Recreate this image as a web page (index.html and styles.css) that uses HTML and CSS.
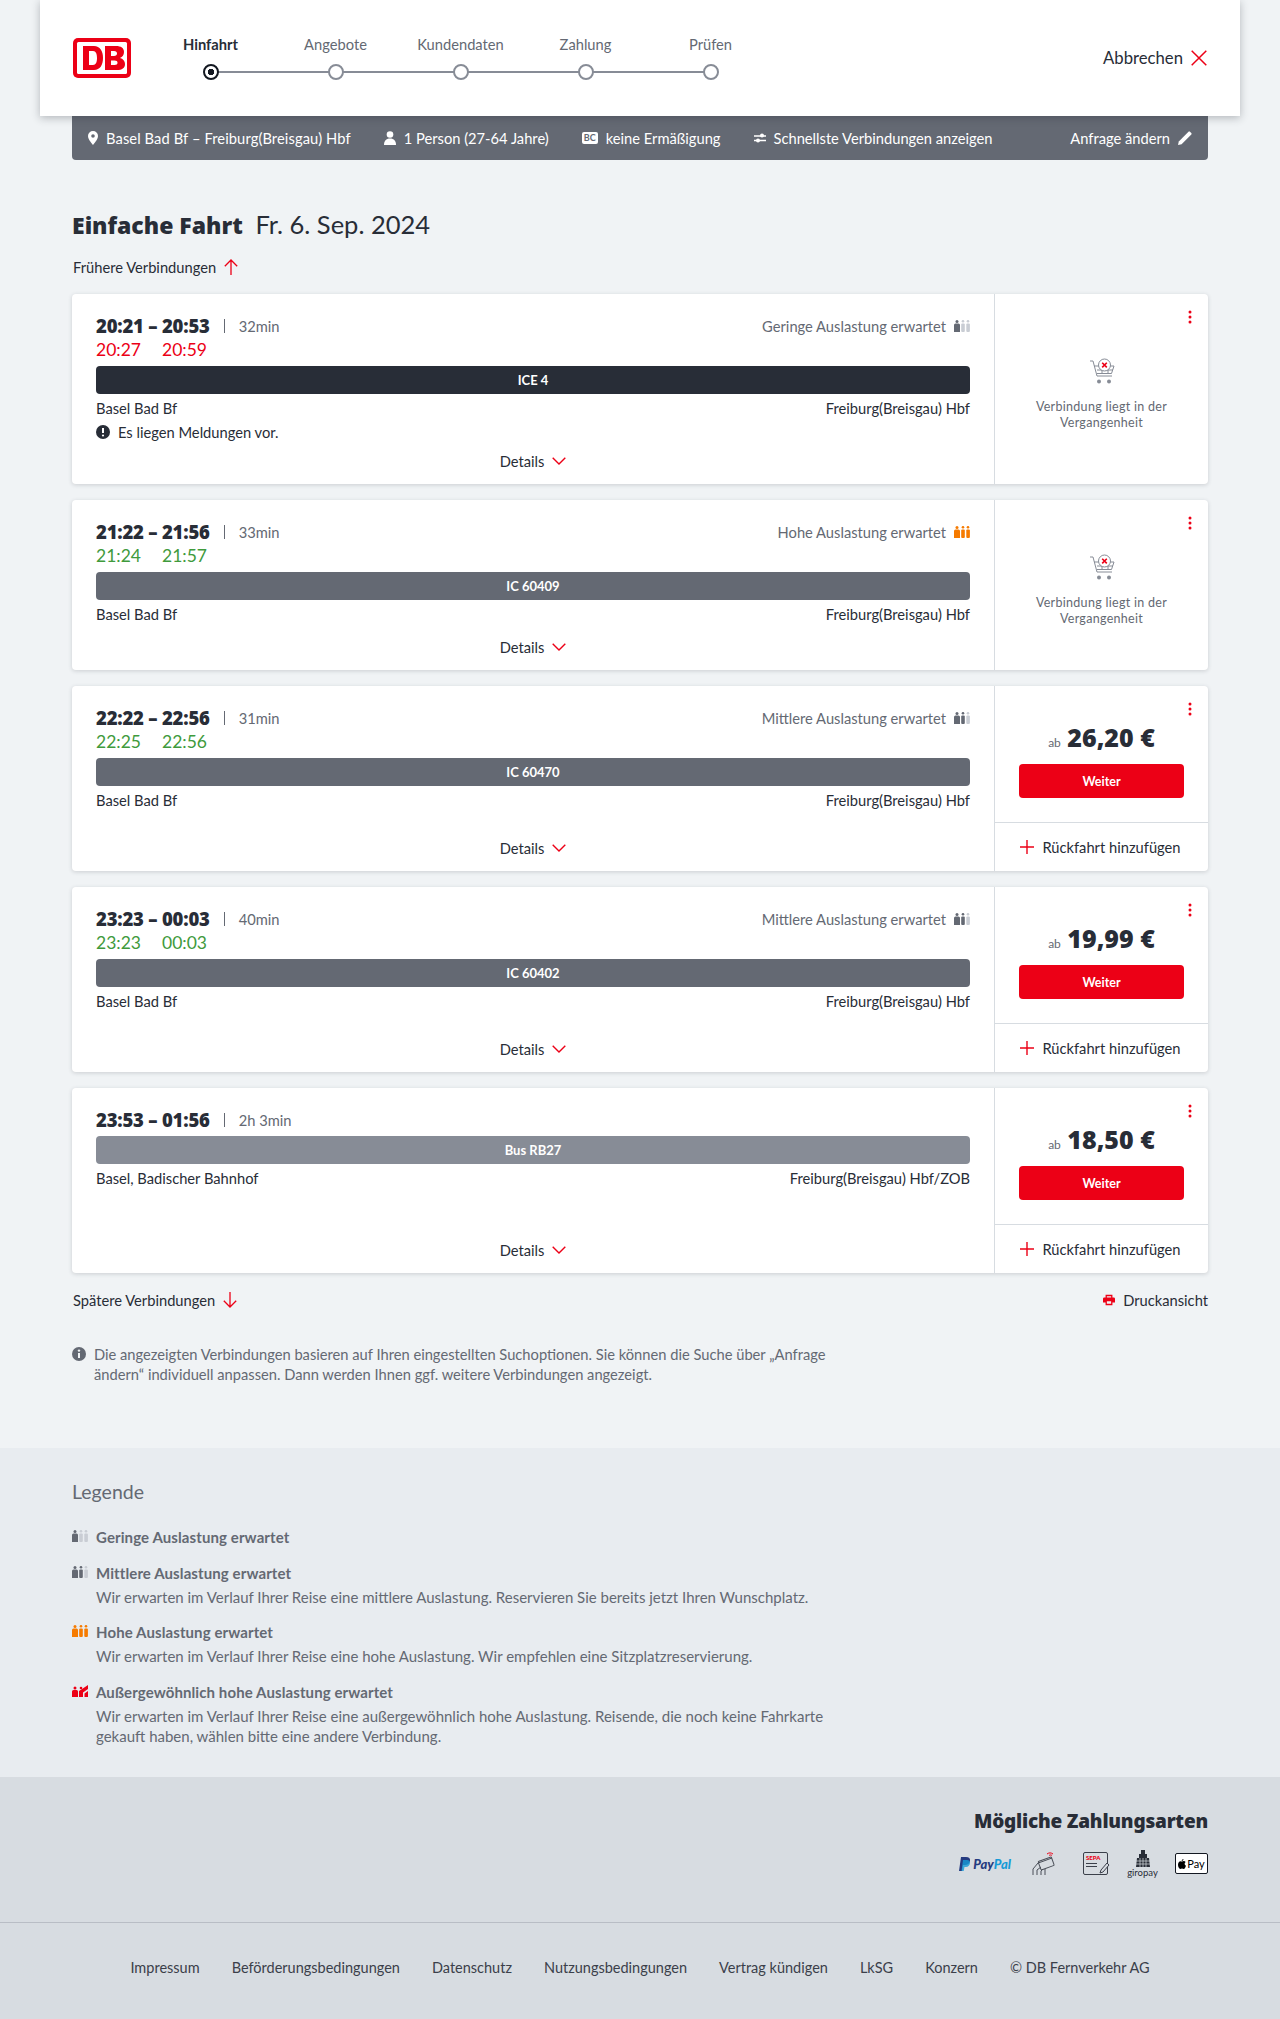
FILE: index.html
```html
<!DOCTYPE html>
<html lang="de">
<head>
  <meta charset="UTF-8" />
  <title>Fahrplan - Einfache Fahrt</title>
  <link rel="stylesheet" href="styles.css">
</head>
<body>
  <svg class="sprite" width="0" height="0">
    <symbol id="occ-low" viewBox="0 0 16 12">
      <g fill="#c9cdd4"><circle cx="9" cy="1.3" r="1.3"/><rect x="7.2" y="3.6" width="3.6" height="8.4" rx="1"/><circle cx="14" cy="1.3" r="1.3"/><rect x="12.3" y="3.6" width="3.6" height="8.4" rx="1"/></g>
      <circle cx="3" cy="1.5" r="1.5" fill="#646973"/><path d="M0 5a1.5 1.5 0 0 1 1.5-1.5h3A1.5 1.5 0 0 1 6 5v7H0z" fill="#646973"/>
    </symbol>
    <symbol id="occ-mid" viewBox="0 0 16 12">
      <circle cx="14" cy="1.3" r="1.3" fill="#c9cdd4"/><rect x="12.3" y="3.6" width="3.6" height="8.4" rx="1" fill="#c9cdd4"/>
      <g fill="#646973"><circle cx="3" cy="1.5" r="1.5"/><path d="M0 5a1.5 1.5 0 0 1 1.5-1.5h3A1.5 1.5 0 0 1 6 5v7H0z"/><circle cx="9" cy="1.3" r="1.3"/><rect x="7.2" y="3.6" width="3.6" height="8.4" rx="1"/></g>
    </symbol>
    <symbol id="occ-high" viewBox="0 0 16 12">
      <g fill="#f67b00"><circle cx="3" cy="1.5" r="1.5"/><path d="M0 5a1.5 1.5 0 0 1 1.5-1.5h3A1.5 1.5 0 0 1 6 5v7H0z"/><circle cx="9" cy="1.3" r="1.3"/><rect x="7.2" y="3.6" width="3.6" height="8.4" rx="1"/><circle cx="14" cy="1.3" r="1.3"/><rect x="12.3" y="3.6" width="3.6" height="8.4" rx="1"/></g>
    </symbol>
    <symbol id="cart" viewBox="0 0 26 26">
      <g fill="none" stroke="#878c96" stroke-width="1">
        <path d="M1 3h3l4 15h15"/><path d="M5 8h20l-2.5 7.5H8"/><path d="M8 12h16M13 8v7M19 8v7"/>
        <circle cx="15.5" cy="7" r="6" fill="#fff"/>
      </g>
      <circle cx="10" cy="23.5" r="2" fill="#878c96"/><circle cx="20" cy="23.5" r="2" fill="#878c96"/>
      <path d="M13.2 4.8l4.6 4.6M17.8 4.8l-4.6 4.6" stroke="#ec0016" stroke-width="1.6" fill="none"/>
    </symbol>
    <symbol id="chevron" viewBox="0 0 14 8"><path d="M.7.7L7 7l6.3-6.3" fill="none" stroke="#ec0016" stroke-width="1.4"/></symbol>
    <symbol id="plus" viewBox="0 0 14 14"><path d="M7 0v14M0 7h14" fill="none" stroke="#ec0016" stroke-width="1.4"/></symbol>
    <symbol id="dots" viewBox="0 0 4 14"><g fill="#ec0016"><circle cx="2" cy="2" r="1.5"/><circle cx="2" cy="7" r="1.5"/><circle cx="2" cy="12" r="1.5"/></g></symbol>
  </svg>

  <header class="topbar">
    <svg class="db-logo" viewBox="0 0 58 40">
      <rect width="58" height="40" rx="5" fill="#ec0016"/>
      <rect x="4" y="4" width="50" height="32" rx="1.5" fill="#fff"/>
      <path d="M10 8h11c6 0 9 5 9 12s-3 12-9 12H10zM16 13v14h4c3 0 4-3 4-7s-1-7-4-7zM32 8h11c5 0 8 2 8 6 0 3-1.500 5-4 6 3 .8 5 3 5 6 0 4-3 6-8 6H32zM38 13v5h3c2 0 3-1 3-2.500S43 13 41 13zM38 22.500V27h3.500c2 0 3-1 3-2.300s-1-2.200-3-2.200z" fill="#ec0016" fill-rule="evenodd"/>
    </svg>
    <ol class="steps">
      <li class="step step-active"><span class="step-label">Hinfahrt</span><span class="step-dot"></span></li>
      <li class="step"><span class="step-label">Angebote</span><span class="step-dot"></span></li>
      <li class="step"><span class="step-label">Kundendaten</span><span class="step-dot"></span></li>
      <li class="step"><span class="step-label">Zahlung</span><span class="step-dot"></span></li>
      <li class="step"><span class="step-label">Prüfen</span><span class="step-dot"></span></li>
    </ol>
    <div class="cancel">
      <span>Abbrechen</span>
      <svg width="16" height="16" viewBox="0 0 16 16"><path d="M.7.700l14.600 14.600M15.300.700L.7 15.300" fill="none" stroke="#ec0016" stroke-width="1.5"/></svg>
    </div>
  </header>

  <div class="summary">
    <div class="summary-item summary-route">
      <svg width="10" height="14" viewBox="0 0 10 14"><path d="M5 0a5 5 0 0 1 5 5c0 3.500-5 9-5 9S0 8.500 0 5a5 5 0 0 1 5-5zm0 3.200a1.800 1.800 0 1 0 0 3.600 1.800 1.800 0 0 0 0-3.600z" fill="#fff" fill-rule="evenodd"/></svg>
      <span>Basel Bad Bf – Freiburg(Breisgau) Hbf</span>
    </div>
    <div class="summary-item">
      <svg width="12" height="14" viewBox="0 0 12 14"><circle cx="6" cy="3.500" r="3.300" fill="#fff"/><path d="M0 14c0-4 2-6.500 6-6.500s6 2.500 6 6.500z" fill="#fff"/></svg>
      <span>1 Person (27-64 Jahre)</span>
    </div>
    <div class="summary-item">
      <span class="bc-badge">BC</span>
      <span>keine Ermäßigung</span>
    </div>
    <div class="summary-item">
      <svg width="12" height="10" viewBox="0 0 12 10"><path d="M0 3h12M0 7.500h12" stroke="#fff" stroke-width="1.500"/><circle cx="8" cy="2.500" r="2" fill="#fff"/><circle cx="4" cy="7.500" r="2" fill="#fff"/></svg>
      <span>Schnellste Verbindungen anzeigen</span>
    </div>
    <div class="summary-item summary-edit">
      <span>Anfrage ändern</span>
      <svg width="14" height="14" viewBox="0 0 14 14"><path d="M0 14l.8-3.600L10.500.7a1 1 0 0 1 1.400 0l1.400 1.400a1 1 0 0 1 0 1.400L3.600 13.200z" fill="#fff"/></svg>
    </div>
  </div>

  <main class="content">
    <h1 class="page-title"><strong>Einfache Fahrt</strong> <span>Fr. 6. Sep. 2024</span></h1>
    <a class="page-link">Frühere Verbindungen
      <svg width="14" height="16" viewBox="0 0 14 16"><path d="M7 16V1M.8 7.200L7 1l6.200 6.200" fill="none" stroke="#ec0016" stroke-width="1.300"/></svg>
    </a>

    <section class="results">
      <article class="card">
        <div class="trip">
          <div class="trip-head">
            <span class="times">20:21 – 20:53</span><span class="sep"></span><span class="duration">32min</span>
            <span class="load">Geringe Auslastung erwartet <svg class="occ"><use href="#occ-low"/></svg></span>
          </div>
          <div class="delay late"><span>20:27</span><span>20:59</span></div>
          <div class="train train-ice">ICE 4</div>
          <div class="stations"><span>Basel Bad Bf</span><span>Freiburg(Breisgau) Hbf</span></div>
          <div class="notice">
            <svg width="14" height="14" viewBox="0 0 14 14"><circle cx="7" cy="7" r="7" fill="#282d37"/><path d="M7 3v5" stroke="#fff" stroke-width="2"/><circle cx="7" cy="10.500" r="1.100" fill="#fff"/></svg>
            Es liegen Meldungen vor.
          </div>
          <div class="details">Details <svg class="chev"><use href="#chevron"/></svg></div>
        </div>
        <aside class="offer offer-past">
          <svg class="more"><use href="#dots"/></svg>
          <svg class="cart"><use href="#cart"/></svg>
          <p>Verbindung liegt in der Vergangenheit</p>
        </aside>
      </article>

      <article class="card">
        <div class="trip">
          <div class="trip-head">
            <span class="times">21:22 – 21:56</span><span class="sep"></span><span class="duration">33min</span>
            <span class="load">Hohe Auslastung erwartet <svg class="occ"><use href="#occ-high"/></svg></span>
          </div>
          <div class="delay ontime"><span>21:24</span><span>21:57</span></div>
          <div class="train">IC 60409</div>
          <div class="stations"><span>Basel Bad Bf</span><span>Freiburg(Breisgau) Hbf</span></div>
          <div class="details">Details <svg class="chev"><use href="#chevron"/></svg></div>
        </div>
        <aside class="offer offer-past">
          <svg class="more"><use href="#dots"/></svg>
          <svg class="cart"><use href="#cart"/></svg>
          <p>Verbindung liegt in der Vergangenheit</p>
        </aside>
      </article>

      <article class="card">
        <div class="trip">
          <div class="trip-head">
            <span class="times">22:22 – 22:56</span><span class="sep"></span><span class="duration">31min</span>
            <span class="load">Mittlere Auslastung erwartet <svg class="occ"><use href="#occ-mid"/></svg></span>
          </div>
          <div class="delay ontime"><span>22:25</span><span>22:56</span></div>
          <div class="train">IC 60470</div>
          <div class="stations"><span>Basel Bad Bf</span><span>Freiburg(Breisgau) Hbf</span></div>
          <div class="details">Details <svg class="chev"><use href="#chevron"/></svg></div>
        </div>
        <aside class="offer">
          <svg class="more"><use href="#dots"/></svg>
          <div class="offer-main">
            <div class="price"><small>ab</small> 26,20 €</div>
            <button class="btn-next">Weiter</button>
          </div>
          <div class="return"><svg class="plus"><use href="#plus"/></svg>Rückfahrt hinzufügen</div>
        </aside>
      </article>

      <article class="card">
        <div class="trip">
          <div class="trip-head">
            <span class="times">23:23 – 00:03</span><span class="sep"></span><span class="duration">40min</span>
            <span class="load">Mittlere Auslastung erwartet <svg class="occ"><use href="#occ-mid"/></svg></span>
          </div>
          <div class="delay ontime"><span>23:23</span><span>00:03</span></div>
          <div class="train">IC 60402</div>
          <div class="stations"><span>Basel Bad Bf</span><span>Freiburg(Breisgau) Hbf</span></div>
          <div class="details">Details <svg class="chev"><use href="#chevron"/></svg></div>
        </div>
        <aside class="offer">
          <svg class="more"><use href="#dots"/></svg>
          <div class="offer-main">
            <div class="price"><small>ab</small> 19,99 €</div>
            <button class="btn-next">Weiter</button>
          </div>
          <div class="return"><svg class="plus"><use href="#plus"/></svg>Rückfahrt hinzufügen</div>
        </aside>
      </article>

      <article class="card">
        <div class="trip">
          <div class="trip-head">
            <span class="times">23:53 – 01:56</span><span class="sep"></span><span class="duration">2h 3min</span>
          </div>
          <div class="train train-bus">Bus RB27</div>
          <div class="stations"><span>Basel, Badischer Bahnhof</span><span>Freiburg(Breisgau) Hbf/ZOB</span></div>
          <div class="details">Details <svg class="chev"><use href="#chevron"/></svg></div>
        </div>
        <aside class="offer">
          <svg class="more"><use href="#dots"/></svg>
          <div class="offer-main">
            <div class="price"><small>ab</small> 18,50 €</div>
            <button class="btn-next">Weiter</button>
          </div>
          <div class="return"><svg class="plus"><use href="#plus"/></svg>Rückfahrt hinzufügen</div>
        </aside>
      </article>
    </section>

    <div class="after-results">
      <a class="page-link">Spätere Verbindungen
        <svg width="14" height="16" viewBox="0 0 14 16"><path d="M7 0v15M.8 8.800L7 15l6.200-6.200" fill="none" stroke="#ec0016" stroke-width="1.300"/></svg>
      </a>
      <a class="page-link print">
        <svg width="12" height="12" viewBox="0 0 14 14"><path d="M3 4V1h8v3h1.500A1.500 1.500 0 0 1 14 5.500V10h-3v3H3v-3H0V5.500A1.500 1.500 0 0 1 1.500 4zm1.500 0h5V2.500h-5zm0 4.500v3h5v-3z" fill="#ec0016" fill-rule="evenodd"/></svg>
        Druckansicht
      </a>
    </div>

    <p class="hint">
      <svg width="14" height="14" viewBox="0 0 14 14"><circle cx="7" cy="7" r="7" fill="#646973"/><path d="M7 6v5" stroke="#f0f3f5" stroke-width="2"/><circle cx="7" cy="3.600" r="1.200" fill="#f0f3f5"/></svg>
      <span>Die angezeigten Verbindungen basieren auf Ihren eingestellten Suchoptionen. Sie können die Suche über „Anfrage ändern“ individuell anpassen. Dann werden Ihnen ggf. weitere Verbindungen angezeigt.</span>
    </p>
  </main>

  <section class="legend">
    <h2>Legende</h2>
    <div class="legend-item">
      <svg class="occ"><use href="#occ-low"/></svg>
      <div><h3>Geringe Auslastung erwartet</h3></div>
    </div>
    <div class="legend-item">
      <svg class="occ"><use href="#occ-mid"/></svg>
      <div><h3>Mittlere Auslastung erwartet</h3><p>Wir erwarten im Verlauf Ihrer Reise eine mittlere Auslastung. Reservieren Sie bereits jetzt Ihren Wunschplatz.</p></div>
    </div>
    <div class="legend-item">
      <svg class="occ"><use href="#occ-high"/></svg>
      <div><h3>Hohe Auslastung erwartet</h3><p>Wir erwarten im Verlauf Ihrer Reise eine hohe Auslastung. Wir empfehlen eine Sitzplatzreservierung.</p></div>
    </div>
    <div class="legend-item">
      <svg class="occ" viewBox="0 0 16 12">
        <g fill="#ec0016"><circle cx="3" cy="3" r="1.500"/><path d="M0 6.500A1.500 1.500 0 0 1 1.500 5h3A1.500 1.500 0 0 1 6 6.500V12H0z"/><circle cx="9" cy="3" r="1.300"/><path d="M7 12V6l9-6v4l-5 3.500V12zM12.500 12V8.500L16 6v6z"/></g>
      </svg>
      <div><h3>Außergewöhnlich hohe Auslastung erwartet</h3><p>Wir erwarten im Verlauf Ihrer Reise eine außergewöhnlich hohe Auslastung. Reisende, die noch keine Fahrkarte gekauft haben, wählen bitte eine andere Verbindung.</p></div>
    </div>
  </section>

  <section class="payment">
    <h2>Mögliche Zahlungsarten</h2>
    <div class="pay-icons">
      <div class="pay-paypal">
        <svg width="12" height="14" viewBox="0 0 12 14"><path d="M2 0h5c3 0 4.500 1.500 4 4s-2.500 4-5 4H4l-1 6H0z" fill="#253b80"/><path d="M4 3h4c2 0 3 1 3 3s-2 4-4 4H5.500l-.8 4H2.500z" fill="#179bd7" opacity=".8"/></svg>
        <span class="pp-a">Pay</span><span class="pp-b">Pal</span>
      </div>
      <svg class="pay-card" width="23" height="24" viewBox="0 0 23 24" fill="none" stroke="#4a4f58" stroke-width="1">
        <rect x="7" y="7" width="14" height="9" rx="1" transform="rotate(-20 14 11)"/>
        <path d="M9 10l11-4"/>
        <path d="M1 23v-6l5-6 3-1M5 23v-5l4-3M9 23v-4l2-2M13 23v-6"/>
        <path d="M15 2c2-1.500 4-1.500 6 0M17 3.500c1-.7 2-.7 3 0" stroke="#ec0016"/>
      </svg>
      <div class="pay-sepa">
        <span>SEPA</span>
        <i></i><i></i>
        <svg width="12" height="12" viewBox="0 0 12 12"><path d="M1 11l1-3 6-7 2 2-6 7z" fill="#d7dce1" stroke="#3b404a" stroke-width="1"/></svg>
      </div>
      <div class="pay-giro">
        <svg width="14" height="17" viewBox="0 0 14 17"><rect x="5" y="0" width="4" height="4" fill="#282d37"/><rect x="3" y="4" width="8" height="4" fill="#282d37"/><path d="M1 8h12l1 9H0z" fill="#282d37"/><path d="M0 11h14M0 14h14M4 8v9M7 8v9M10 8v9" stroke="#d7dce1" stroke-width=".7"/></svg>
        <span>giropay</span>
      </div>
      <div class="pay-apple">
        <svg width="8" height="10" viewBox="0 0 8 10"><path d="M5.500 0c0 1-.8 2-1.800 2C3.600 1 4.500.1 5.500 0zM4 2.500c.6 0 1-.4 1.800-.4.700 0 1.400.4 1.800 1-1.500 1-1.200 3 .4 3.600C7.500 8 6.700 10 5.700 10c-.7 0-1-.4-1.700-.4S3 10 2.300 10C1 10 0 7.500 0 5.800c0-2 1.200-3.600 2.500-3.600.6 0 1.100.3 1.500.3z" fill="#000"/></svg>
        <span>Pay</span>
      </div>
    </div>
  </section>

  <footer class="site-footer">
    <a>Impressum</a>
    <a>Beförderungsbedingungen</a>
    <a>Datenschutz</a>
    <a>Nutzungsbedingungen</a>
    <a>Vertrag kündigen</a>
    <a>LkSG</a>
    <a>Konzern</a>
    <a>© DB Fernverkehr AG</a>
  </footer>
</body>
</html>
```

FILE: styles.css
```css
* {
  box-sizing: border-box;
}
body {
  margin: 0;
  font-family: Lato, "Noto Sans", sans-serif;
  font-size: 14.7px;
  line-height: 20px;
  color: #282d37;
  background: #f0f3f5;
}
h1, h2, h3, p, ol {
  margin: 0;
  padding: 0;
}
.sprite {
  position: absolute;
}
.page-title strong, .times, .price, .payment h2 {
  font-family: "Noto Sans", Lato, sans-serif;
  font-weight: 900;
}

/* top bar */
.topbar {
  position: relative;
  z-index: 2;
  display: flex;
  align-items: center;
  height: 116px;
  margin: 0 40px;
  padding: 0 33px 0 33px;
  background: #fff;
  box-shadow: 0 2px 8px rgba(40, 45, 55, 0.3);
}
.db-logo {
  width: 58px;
  height: 40px;
  flex: none;
}
.steps {
  display: flex;
  list-style: none;
  margin-left: 17px;
  margin-top: -2px;
}
.step {
  position: relative;
  display: flex;
  flex-direction: column;
  align-items: center;
  width: 125px;
  color: #646973;
}
.step:not(:last-child)::after {
  content: "";
  position: absolute;
  left: 50%;
  bottom: 7px;
  width: 125px;
  height: 2px;
  background: #878c96;
}
.step-label {
  height: 20px;
  margin-bottom: 10px;
}
.step-dot {
  position: relative;
  z-index: 1;
  width: 16px;
  height: 16px;
  border: 2px solid #878c96;
  border-radius: 50%;
  background: #fff;
}
.step-active {
  color: #282d37;
  font-weight: 700;
}
.step-active .step-dot {
  border-color: #131821;
  background: radial-gradient(circle, #131821 0 3px, #fff 3.500px);
}
.cancel {
  display: flex;
  align-items: center;
  gap: 8px;
  margin-left: auto;
  font-size: 16.700px;
}

/* search summary */
.summary {
  display: flex;
  align-items: center;
  height: 44px;
  margin: 0 72px;
  padding: 0 16px;
  gap: 33px;
  background: #646973;
  color: #fff;
  border-radius: 0 0 4px 4px;
}
.summary-item {
  display: flex;
  align-items: center;
  gap: 8px;
}
.summary-route span {
  letter-spacing: 0.1px;
}
.bc-badge {
  width: 16px;
  height: 12px;
  background: #fff;
  color: #646973;
  border-radius: 2px;
  font-size: 9px;
  font-weight: 700;
  line-height: 12px;
  text-align: center;
}
.summary-edit {
  margin-left: auto;
}

/* main */
.content {
  padding: 0 72px;
}
.page-title {
  margin-top: 48px;
  font-size: 25.500px;
  line-height: 32px;
  font-weight: 400;
}
.page-title strong {
  font-size: 23px;
  margin-right: 6px;
}
.page-link {
  display: flex;
  align-items: center;
  gap: 8px;
  padding-left: 1px;
}
.page-link.print {
  padding-left: 0;
}
.content > .page-link {
  height: 20px;
  margin-top: 16px;
}
.results {
  display: flex;
  flex-direction: column;
  gap: 16px;
  margin-top: 17px;
}
.card {
  display: grid;
  grid-template-columns: 1fr 214px;
  background: #fff;
  border-radius: 4px;
  box-shadow: 0 1px 4px rgba(40, 45, 55, 0.18);
}
.trip {
  display: flex;
  flex-direction: column;
  padding: 20px 24px 4px;
}
.trip-head {
  display: flex;
  align-items: center;
  height: 24px;
}
.times {
  font-size: 18.500px;
  letter-spacing: -0.2px;
}
.sep {
  width: 1px;
  height: 14px;
  margin: 0 14px;
  background: #646973;
}
.duration {
  color: #646973;
}
.load {
  display: flex;
  align-items: center;
  gap: 8px;
  margin-left: auto;
  color: #646973;
}
.occ {
  width: 16px;
  height: 12px;
  flex: none;
}
.delay {
  display: flex;
  gap: 21px;
  height: 24px;
  font-size: 17.500px;
  line-height: 24px;
}
.late {
  color: #ec0016;
}
.ontime {
  color: #409a3c;
}
.train {
  height: 28px;
  margin-top: 4px;
  border-radius: 4px;
  background: #646973;
  color: #fff;
  font-size: 13px;
  font-weight: 700;
  line-height: 28px;
  text-align: center;
}
.train-ice {
  background: #282d37;
}
.train-bus {
  background: #878c96;
}
.stations {
  display: flex;
  justify-content: space-between;
  margin: 4px 0;
}
.notice {
  display: flex;
  align-items: center;
  gap: 8px;
}
.details {
  display: flex;
  align-items: center;
  justify-content: center;
  gap: 8px;
  height: 38px;
  margin-top: auto;
}
.chev {
  width: 14px;
  height: 8px;
}

/* offer column */
.offer {
  position: relative;
  display: flex;
  flex-direction: column;
  border-left: 1px solid #d7dce1;
}
.more {
  position: absolute;
  top: 16px;
  right: 16px;
  width: 4px;
  height: 14px;
}
.offer-past {
  align-items: center;
  justify-content: center;
  padding-top: 10px;
}
.offer-past p {
  width: 150px;
  margin-top: 15px;
  font-size: 12.500px;
  line-height: 16px;
  letter-spacing: 0.3px;
  text-align: center;
  color: #646973;
}
.cart {
  width: 26px;
  height: 26px;
}
.offer-main {
  display: flex;
  flex-direction: column;
  align-items: center;
  height: 137px;
  padding-top: 31px;
  border-bottom: 1px solid #d7dce1;
}
.price {
  height: 40px;
  font-size: 25px;
  line-height: 40px;
}
.price small {
  font-family: Lato, sans-serif;
  font-size: 12px;
  font-weight: 400;
  color: #646973;
}
.btn-next {
  width: 165px;
  height: 34px;
  margin-top: 7px;
  border: none;
  border-radius: 4px;
  background: #ec0016;
  color: #fff;
  font-family: inherit;
  font-size: 12.500px;
  font-weight: 700;
}
.return {
  display: flex;
  align-items: center;
  justify-content: center;
  gap: 8px;
  height: 48px;
  padding-right: 2px;
}
.plus {
  width: 14px;
  height: 14px;
}

/* below results */
.after-results {
  display: flex;
  justify-content: space-between;
  margin-top: 17px;
}
.hint {
  display: flex;
  gap: 8px;
  max-width: 757px;
  margin-top: 34px;
  color: #646973;
}
.hint svg {
  flex: none;
  margin-top: 3px;
}

/* legend */
.legend {
  margin-top: 64px;
  padding: 30px 72px 31px;
  background: #e8ecf0;
  color: #646973;
  font-size: 15px;
}
.legend h2 {
  margin-bottom: 21px;
  font-size: 19.500px;
  line-height: 28px;
  font-weight: 400;
}
.legend-item {
  display: flex;
  gap: 8px;
  margin-bottom: 15.600px;
}
.legend-item:last-child {
  margin-bottom: 0;
}
.legend-item .occ {
  margin-top: 3px;
}
.legend-item h3 {
  font-size: 15px;
  font-weight: 700;
  letter-spacing: 0.1px;
}
.legend-item p {
  max-width: 760px;
  margin-top: 4px;
}

/* payment */
.payment {
  display: flex;
  flex-direction: column;
  align-items: flex-end;
  height: 146px;
  padding: 30px 72px 0;
  background: #d7dce1;
  border-bottom: 1px solid #b8bdc5;
}
.payment h2 {
  font-size: 19px;
  letter-spacing: -0.2px;
  line-height: 28px;
}
.pay-icons {
  display: flex;
  align-items: center;
  height: 32px;
  margin-top: 13px;
}
.pay-paypal {
  display: flex;
  align-items: center;
  gap: 2px;
  font-size: 13px;
  font-weight: 900;
  font-style: italic;
}
.pp-a {
  color: #253b80;
}
.pp-b {
  color: #179bd7;
  margin-left: -2px;
}
.pay-card {
  margin-left: 21px;
}
.pay-sepa {
  position: relative;
  width: 25px;
  height: 23px;
  margin-left: 28px;
  padding: 1px 2px;
  border: 1px solid #3b404a;
  border-radius: 2px;
}
.pay-sepa span {
  display: block;
  color: #ec0016;
  font-size: 6px;
  font-weight: 900;
  line-height: 7px;
}
.pay-sepa i {
  display: block;
  width: 11px;
  height: 1px;
  margin-top: 2px;
  background: #3b404a;
}
.pay-sepa svg {
  position: absolute;
  right: -4px;
  bottom: 0;
}
.pay-giro {
  display: flex;
  flex-direction: column;
  align-items: center;
  width: 33px;
  margin-left: 18px;
  font-size: 9.500px;
  line-height: 11px;
  color: #282d37;
}
.pay-apple {
  display: flex;
  align-items: center;
  justify-content: center;
  gap: 1px;
  width: 33px;
  height: 21px;
  margin-left: 16px;
  background: #fff;
  border: 1px solid #131821;
  border-radius: 2px;
  font-size: 11px;
  color: #000;
}

/* footer */
.site-footer {
  display: flex;
  justify-content: center;
  align-items: center;
  gap: 32px;
  height: 100px;
  padding-bottom: 10px;
  background: #d7dce1;
  color: #3b404a;
  font-size: 14.500px;
}
```
